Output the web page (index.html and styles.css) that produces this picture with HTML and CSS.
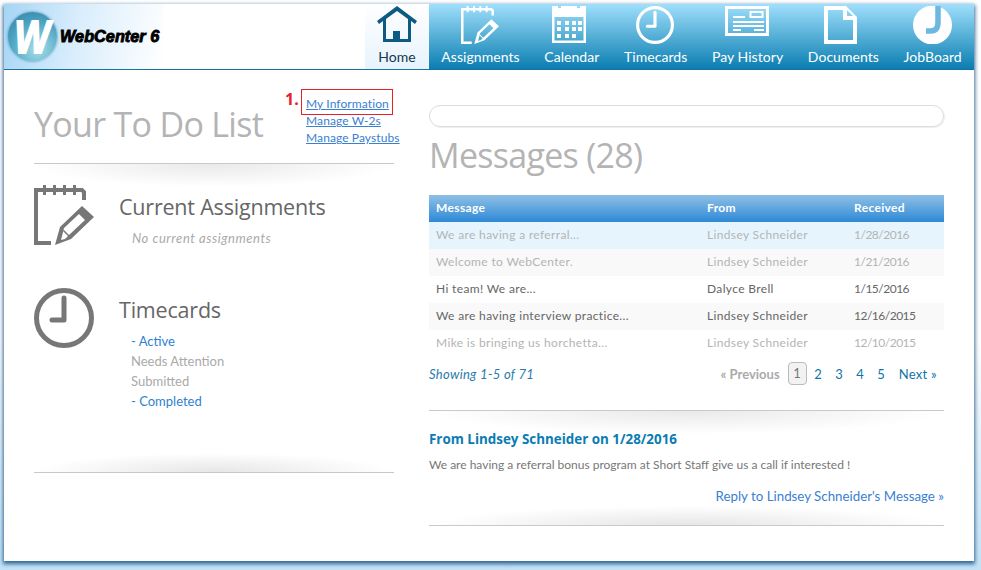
FILE: index.html
```html
<!DOCTYPE html>
<html lang="en">
<head>
<meta charset="utf-8">
<title>WebCenter 6</title>
<link rel="stylesheet" href="styles.css">
</head>
<body>
<svg class="defs" width="0" height="0" aria-hidden="true">
  <symbol id="i-assign" viewBox="0 0 60 60">
    <path d="M2 60V7h46l2 2v8" fill="none" stroke="currentColor" stroke-width="4" stroke-linejoin="miter" transform="translate(0 -2)"/>
    <path d="M0 56h17v4H0z" fill="currentColor"/>
    <path d="M9 0h3v10H9zM19 0h3v10h-3zM29 0h3v10h-3zM39 0h3v10h-3z" fill="currentColor"/>
    <path fill-rule="evenodd" fill="currentColor" d="M21 60l5-18 22-21 12 11-23 22zM30 43l-3 12 4-1 3-3-5-5 1-1 5 5 16-15-6-6z"/>
  </symbol>
  <symbol id="i-clock" viewBox="0 0 60 60">
    <circle cx="30" cy="30" r="27.5" fill="none" stroke="currentColor" stroke-width="5"/>
    <path d="M30 10v22H18" fill="none" stroke="currentColor" stroke-width="5" stroke-linecap="round" stroke-linejoin="round"/>
  </symbol>
</svg>
<div class="page">
  <header class="topbar">
    <div class="logo">
      <span class="logo-ball"><span class="logo-w">W</span></span>
      <span class="logo-text">WebCenter 6</span>
    </div>
    <nav class="nav">
      <a class="nav-item active">
        <svg class="nav-icon" width="40" height="37" viewBox="0 0 40 37"><path fill="#0b5b82" fill-rule="evenodd" d="M20 0L0 15l2 3 4-3v21h28V15l4 3 2-3zM20 5l11 8v20h-8v-8h-7v8H9V13z"/></svg>
        <span>Home</span>
      </a>
      <a class="nav-item">
        <svg class="nav-icon" width="38" height="38"><use href="#i-assign"/></svg>
        <span>Assignments</span>
      </a>
      <a class="nav-item">
        <svg class="nav-icon nudge-3" width="34" height="38" viewBox="0 0 34 38"><path fill="currentColor" fill-rule="evenodd" d="M0 0h6v2h3V0h16v2h3V0h6v37H0zM2.500 11v23.500h29V11zM5 15h4v4H5zM13 15h4v4h-4zM20 15h4v4h-4zM26 15h4v4h-4zM5 21h4v4H5zM13 21h4v4h-4zM20 21h4v4h-4zM26 21h4v4h-4zM5 28h4v4H5zM13 28h4v4h-4zM20 28h4v4h-4z"/></svg>
        <span>Calendar</span>
      </a>
      <a class="nav-item">
        <svg class="nav-icon nudge-1" width="38" height="38"><use href="#i-clock"/></svg>
        <span>Timecards</span>
      </a>
      <a class="nav-item">
        <svg class="nav-icon nudge-1" width="44" height="38" viewBox="0 0 44 38"><path fill="none" stroke="currentColor" stroke-width="3" d="M1.500 1.500h41v27h-41z"/><path fill="none" stroke="currentColor" stroke-width="2" d="M25.500 6h12v5h-12zM8 11h12M8 16h31M8 20h31M8 24h8M29 24h10"/></svg>
        <span>Pay History</span>
      </a>
      <a class="nav-item">
        <svg class="nav-icon nudge-2" width="34" height="38" viewBox="0 0 34 38"><path fill="currentColor" fill-rule="evenodd" d="M0 0h22l11 11v27H0zM4 4v30h25V14H19V4zM23 4v6h6z"/></svg>
        <span>Documents</span>
      </a>
      <a class="nav-item">
        <svg class="nav-icon" width="40" height="38" viewBox="0 0 40 38"><circle cx="19.500" cy="19" r="19.500" fill="#fff"/><path fill="none" stroke="#6cb8de" stroke-width="5.500" d="M25 -1v17q0 9-7 9h-5"/></svg>
        <span>JobBoard</span>
      </a>
    </nav>
  </header>

  <main class="content">
    <section class="todo">
      <div class="todo-head">
        <h1 class="page-title">Your To Do List</h1>
        <ul class="quick-links">
          <li><a>My Information</a></li>
          <li><a>Manage W-2s</a></li>
          <li><a>Manage Paystubs</a></li>
        </ul>
        <span class="callout-num">1.</span>
        <span class="callout-box"></span>
      </div>
      <div class="rule rule-down"></div>
      <div class="todo-item assign-item">
        <svg class="todo-icon" width="60" height="60"><use href="#i-assign"/></svg>
        <div>
          <h2 class="todo-title">Current Assignments</h2>
          <p class="todo-empty">No current assignments</p>
        </div>
      </div>
      <div class="todo-item time-item">
        <svg class="todo-icon" width="60" height="60"><use href="#i-clock"/></svg>
        <div>
          <h2 class="todo-title">Timecards</h2>
          <ul class="todo-list">
            <li><a>- Active</a></li>
            <li>Needs Attention</li>
            <li>Submitted</li>
            <li><a>- Completed</a></li>
          </ul>
        </div>
      </div>
      <div class="rule rule-up todo-end"></div>
    </section>

    <section class="messages">
      <div class="search-bar"></div>
      <h1 class="page-title messages-title">Messages (28)</h1>
      <table class="msg-table">
        <thead>
          <tr><th class="c1">Message</th><th class="c2">From</th><th class="c3">Received</th></tr>
        </thead>
        <tbody>
          <tr class="selected read"><td>We are having a referral...</td><td>Lindsey Schneider</td><td>1/28/2016</td></tr>
          <tr class="alt read"><td>Welcome to WebCenter.</td><td>Lindsey Schneider</td><td>1/21/2016</td></tr>
          <tr><td>Hi team! We are...</td><td>Dalyce Brell</td><td>1/15/2016</td></tr>
          <tr class="alt"><td>We are having interview practice...</td><td>Lindsey Schneider</td><td>12/16/2015</td></tr>
          <tr class="read"><td>Mike is bringing us horchetta...</td><td>Lindsey Schneider</td><td>12/10/2015</td></tr>
        </tbody>
      </table>
      <div class="pager-row">
        <em class="showing">Showing 1-5 of 71</em>
        <div class="pager">
          <span class="prev">« Previous</span>
          <span class="current">1</span>
          <a class="num">2</a>
          <a class="num">3</a>
          <a class="num">4</a>
          <a class="num">5</a>
          <a class="next">Next »</a>
        </div>
      </div>
      <div class="rule rule-down msg-rule"></div>
      <h3 class="msg-from">From Lindsey Schneider on 1/28/2016</h3>
      <p class="msg-body">We are having a referral bonus program at Short Staff give us a call if interested !</p>
      <p class="msg-reply"><a>Reply to Lindsey Schneider's Message »</a></p>
      <div class="rule rule-up reply-rule"></div>
    </section>
  </main>
</div>
</body>
</html>
```
FILE: styles.css
```css
* { box-sizing: border-box; }
html, body { margin: 0; height: 100%; }
body {
  padding: 4px 7px 9px 4px;
  overflow: hidden;
  background: linear-gradient(#ffffff 0, #ffffff 60%, #c3e2f6 100%);
  font-family: "Lato", "Liberation Sans", sans-serif;
  font-size: 12px;
  color: #666;
}
.defs { position: absolute; }
h1, h2, h3, p, ul { margin: 0; padding: 0; }
ul { list-style: none; }

.page {
  width: 970px;
  height: 557px;
  background: #fff;
  box-shadow: 0 2px 4px 1px rgba(20, 80, 130, .85);
}

.topbar {
  display: flex;
  justify-content: space-between;
  height: 66px;
  border-bottom: 1px solid #1a719f;
}
.logo {
  display: flex;
  align-items: center;
  width: 160px;
  padding-left: 4px;
  background: linear-gradient(100deg, #a5d5f5 0, #d9edfc 45%, #ffffff 100%);
}
.logo-ball {
  display: flex;
  align-items: center;
  justify-content: center;
  width: 49px;
  height: 49px;
  flex: none;
  border-radius: 50%;
  background: radial-gradient(circle at 60% 75%, #a7e0ea 0, #4fa6c4 55%, #31799c 100%);
  box-shadow: 0 0 3px #3d86aa;
}
.logo-w {
  font: italic 700 47px/1 "Liberation Sans", sans-serif;
  color: #fff;
  -webkit-text-stroke: 2px #fff;
  transform: scaleX(.8);
}
.logo-text {
  margin-left: 3px;
  font: italic 700 16.300px/1 "Liberation Sans", sans-serif;
  color: #000;
  -webkit-text-stroke: .9px #000;
  white-space: nowrap;
}

.nav {
  display: flex;
  width: 609px;
  background: linear-gradient(#a0dffc 0, #0a7eb1 100%);
}
.nav-item {
  display: flex;
  flex-direction: column;
  align-items: center;
  justify-content: space-between;
  padding: 2px 12px 4px;
  flex: auto;
  color: #fff;
  font: 14px/17px "Lato", "Liberation Sans", sans-serif;
  letter-spacing: .05px;
  white-space: nowrap;
}
.nav-item.active {
  flex: none;
  width: 64px;
  background: linear-gradient(#fff 0, #e7f3fd 100%);
  color: #15384f;
}
.nav-icon { display: block; }
.nudge-1 { margin-right: 2px; }
.nudge-2 { margin-right: 4px; }
.nudge-3 { margin-right: 6px; }

.content {
  display: flex;
  justify-content: space-between;
  width: 910px;
  margin-left: 30px;
}
.todo { width: 360px; }
.messages { width: 515px; padding-top: 35px; }

.todo-head { position: relative; height: 93px; }
.page-title {
  font: 400 34px/44px "Open Sans", sans-serif;
  letter-spacing: -.7px;
  color: #b4b4b4;
}
.todo-head .page-title { padding-top: 32px; height: 76px; }
.quick-links {
  position: absolute;
  left: 272px;
  top: 25px;
  line-height: 17px;
  white-space: nowrap;
}
.quick-links a { color: #3a80d2; text-decoration: underline; letter-spacing: .1px; }
.callout-num {
  position: absolute;
  left: 251px;
  top: 19px;
  color: #e8202a;
  font: 700 16px/20px "Open Sans", sans-serif;
}
.callout-box {
  position: absolute;
  left: 267px;
  top: 19px;
  width: 92px;
  height: 26px;
  border: 1px solid #e8202a;
}

.rule { height: 24px; }
.rule-down {
  border-top: 1px solid #c9c9c9;
  background: radial-gradient(ellipse 50% 100% at 50% 0, #e9e9e9 0, rgba(255, 255, 255, 0) 100%);
}
.rule-up {
  height: 20px;
  border-bottom: 1px solid #c9c9c9;
  background: radial-gradient(ellipse 50% 100% at 50% 100%, #e6e6e6 0, rgba(255, 255, 255, 0) 100%);
}

.todo-item { display: flex; gap: 25px; }
.todo-icon { flex: none; color: #777; display: block; }
.assign-item { margin-top: -2px; height: 103px; }
.time-item { height: 165px; }
.todo-title {
  font: 400 21.500px/30px "Open Sans", sans-serif;
  letter-spacing: -.2px;
  color: #666;
  padding-top: 7px;
}
.todo-empty {
  margin: 8px 0 0 13px;
  font-style: italic;
  font-size: 13px;
  line-height: 16px;
  letter-spacing: .55px;
  color: #aaa;
}
.todo-list {
  margin: 6px 0 0 12px;
  font-size: 13px;
  line-height: 20px;
  color: #aaa;
}
.todo-list a { color: #2f7fd1; }

.search-bar {
  height: 22px;
  border: 1px solid #ddd;
  border-radius: 11px;
  box-shadow: 1px 1px 1px #eee;
}
.messages-title { margin-top: 6px; height: 47px; }

.msg-table {
  width: 100%;
  margin-top: 15px;
  border-collapse: collapse;
  table-layout: fixed;
  letter-spacing: .35px;
}
.msg-table th {
  height: 27px;
  padding: 0 0 2px;
  text-align: left;
  color: #fff;
  font-weight: 700;
  background: linear-gradient(#8fc0e6 0, #2e89d6 100%);
}
.msg-table td { height: 27px; padding: 0 0 2px; color: #666; }
.msg-table th.c1, .msg-table td:first-child { padding-left: 7px; }
.msg-table td:last-child { letter-spacing: -.5px; }
.c1 { width: 278px; }
.c2 { width: 147px; }
.msg-table tr.selected td { background: #e6f5fd; }
.msg-table tr.alt td { background: #f9f9f9; }
.msg-table tr.read td { color: #b4b4b4; }

.pager-row {
  display: flex;
  justify-content: space-between;
  align-items: center;
  height: 33px;
  padding: 0 7px 0 0;
}
.showing { color: #2a7bab; font-size: 13px; letter-spacing: .3px; }
.pager { display: flex; align-items: center; font-size: 13px; color: #0f74a8; }
.prev { color: #aaa; font-weight: 700; margin-right: 8px; }
.current {
  width: 19px;
  height: 23px;
  margin-right: 1px;
  border: 1px solid #bbb;
  border-radius: 4px;
  background: #f2f2f2;
  color: #777;
  text-align: center;
  line-height: 21px;
}
.num { width: 21px; text-align: center; }
.next { margin-left: 7px; letter-spacing: .3px; }
.msg-rule { margin-top: 20px; }
.msg-from {
  margin-top: -5px;
  font: 700 13.400px/20px "Open Sans", sans-serif;
  color: #0a7cb3;
}
.msg-body { margin-top: 7px; line-height: 18px; color: #777; }
.msg-reply { margin-top: 12px; text-align: right; font-size: 13.300px; line-height: 20px; }
.msg-reply a { color: #3a80d2; }
.reply-rule { margin-top: 0; }
```
